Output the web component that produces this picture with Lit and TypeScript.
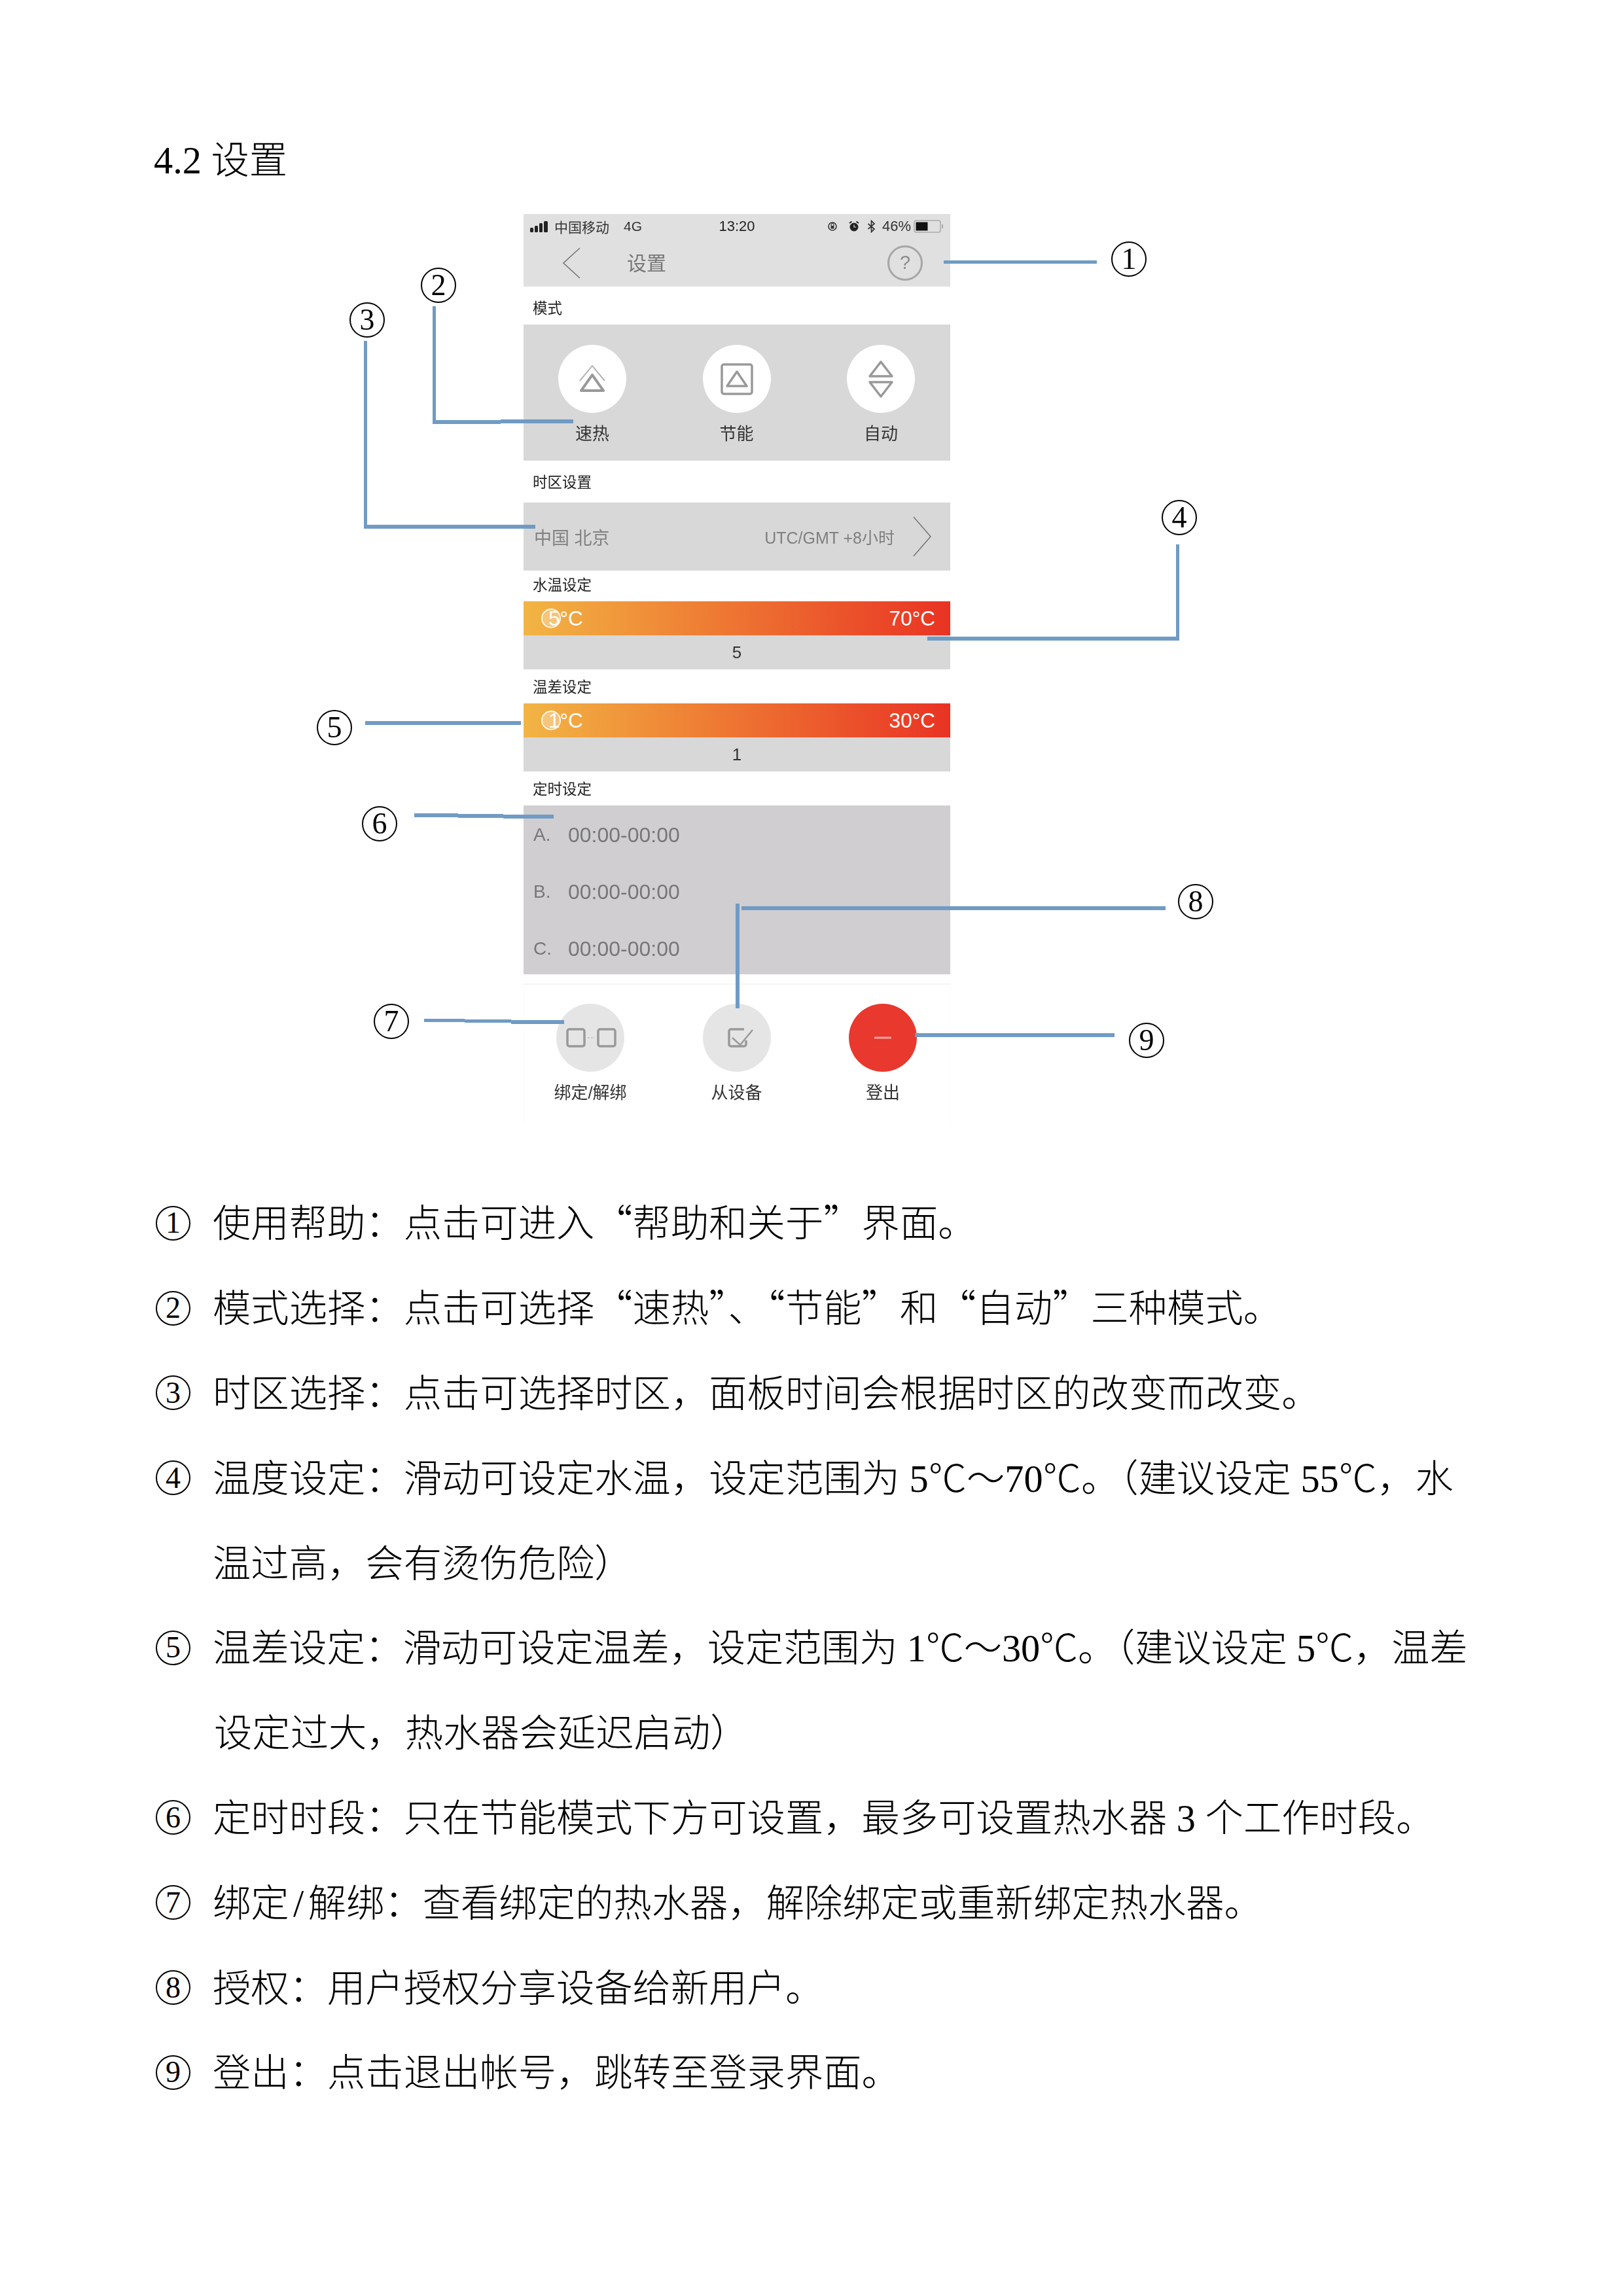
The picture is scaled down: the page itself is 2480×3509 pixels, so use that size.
import { LitElement, html, css, svg } from "lit";
import { customElement } from "lit/decorators.js";

const n = (s: string) => html`<span class="n">${s}</span>`;

const lines: number[][] = [
  [1442, 398, 234, 5],
  [661, 468, 5, 180], [661, 642, 104, 6], [765, 641, 111, 6],
  [556, 521, 5, 287], [556, 802, 262, 6],
  [1797, 832, 5, 146], [1417, 973, 385, 6],
  [558, 1102, 238, 6],
  [633, 1243, 67, 6], [700, 1244, 69, 6], [769, 1245, 77, 6],
  [648, 1557, 62, 5], [710, 1558, 71, 5], [781, 1559, 81, 6],
  [1133, 1385, 648, 6], [1124, 1381, 6, 160],
  [1398, 1579, 305, 6],
];
const marks: number[][] = [
  [1725, 396], [670, 436], [561, 489], [1802, 791], [511, 1112],
  [580, 1259], [598, 1561], [1827, 1378], [1752, 1590],
];

const stroke = "#999";
const icons = {
  fast: svg`<path d="M33 55 52 32 71 55" fill="none" stroke="#b5b5b5" stroke-width="2"/><path d="M52 46 69 70H35Z" fill="none" stroke="${stroke}" stroke-width="4" stroke-linejoin="round"/>`,
  eco: svg`<rect x="29" y="30" width="46" height="45" rx="3" fill="none" stroke="${stroke}" stroke-width="3.5"/><path d="M52 41 67 63H37Z" fill="none" stroke="${stroke}" stroke-width="3.5" stroke-linejoin="round"/>`,
  auto: svg`<path d="M52 26 69 48H35Z" fill="none" stroke="${stroke}" stroke-width="3.5" stroke-linejoin="round"/><path d="M35 57H69L52 79Z" fill="none" stroke="${stroke}" stroke-width="3.5" stroke-linejoin="round"/>`,
  bind: svg`<rect x="17" y="39" width="26" height="26" rx="3" fill="none" stroke="${stroke}" stroke-width="3.5"/><rect x="64" y="39" width="26" height="26" rx="3" fill="none" stroke="${stroke}" stroke-width="3.5"/><path d="M48 52H59" stroke="#c8c8c8" stroke-width="2" stroke-dasharray="3 2"/>`,
  slave: svg`<path d="M63 39H43a3 3 0 0 0-3 3V62a3 3 0 0 0 3 3H63a3 3 0 0 0 3-3V56" fill="none" stroke="${stroke}" stroke-width="3.5"/><path d="M45 52 57 63 76 40" fill="none" stroke="${stroke}" stroke-width="2.4"/>`,
  out: svg`<path d="M39 52H65" stroke="#f4a59f" stroke-width="3"/>`,
};

@customElement("app-root")
export class AppRoot extends LitElement {
  static styles = css`
    :host { display: flow-root; width: 2480px; height: 3509px; overflow: hidden; background: #fff; color: #000;
      font-family: "Noto Sans CJK SC", "Liberation Serif", sans-serif; font-weight: 300; }
    .n { font-family: "Liberation Serif", serif; font-weight: 400; }
    .slash { padding: 0 .11em; }
    .title { margin-top: 212px; padding-left: 235px; height: 64px; font-size: 58.33px; line-height: 56px; }
    .figure { position: relative; margin-top: 51px; padding-left: 800px; }
    .overlay { position: absolute; left: 0; top: 0; width: 2480px; height: 1400px; }
    .overlay text { font-family: "Liberation Serif", serif; font-size: 46px; }
    .phone { width: 652px; filter: blur(0.6px); font-family: "Liberation Sans", "Noto Sans CJK SC", sans-serif; font-weight: 400; color: #333; }
    .head { background: #e0e0e0; height: 111px; }
    .status { height: 38px; display: grid; grid-template-columns: 1fr auto 1fr; align-items: center; font-size: 21px; color: #333; }
    .status-l { display: flex; align-items: center; padding-left: 10px; }
    .sig { margin-right: 9px; }
    .g4 { margin-left: 22px; }
    .time { font-size: 22px; color: #222; }
    .status-r { display: flex; align-items: center; justify-content: flex-end; padding-right: 11px; font-size: 22px; }
    .alarm { margin-left: 18px; }
    .bt { margin-left: 12px; margin-right: 10px; }
    .batt { margin-left: 4px; }
    .nav { height: 73px; display: flex; align-items: center; padding: 0 42px 0 60px; }
    .nav-t { margin-left: 71px; font-size: 30px; color: #777; flex: 1; padding-bottom: 3px; }
    .help { width: 54px; height: 54px; box-sizing: border-box; border: 3px solid #a6a6a6; border-radius: 50%;
      display: flex; align-items: center; justify-content: center; font-size: 29px; color: #8c8c8c; }
    .sec { display: flex; align-items: center; padding: 0 14px 3px; height: 52px; box-sizing: border-box; font-size: 22.5px; color: #222; }
    .s1 { height: 58px; padding-top: 4px; padding-bottom: 0; }
    .s2 { height: 64px; }
    .s3 { height: 47px; padding-bottom: 8px; }
    .row3 { display: flex; justify-content: space-between; padding: 0 54px 0 53px; }
    .modes { background: #d8d8d8; height: 208px; padding-top: 31px; box-sizing: border-box; }
    .item { width: 104px; display: flex; flex-direction: column; align-items: center; }
    .dot { width: 104px; height: 104px; border-radius: 50%; background: #fff; }
    .dot svg { display: block; }
    .lab { white-space: nowrap; font-size: 26px; line-height: 30px; color: #333; }
    .modes .lab { margin-top: 17px; }
    .tz { background: #d8d8d8; height: 104px; display: flex; align-items: center; padding: 0 29px 0 16px; color: #808080; }
    .tz-a { font-size: 27px; flex: 1; }
    .tz-b { font-size: 25px; margin-right: 28px; }
    .grad { height: 52px; display: flex; align-items: center; justify-content: space-between; position: relative;
      padding: 0 23px 0 38px; color: #fff; font-size: 31.5px;
      background: linear-gradient(90deg, #f2b544 0%, #ee7a33 45%, #e93324 100%); }
    .thumb { position: absolute; left: 27px; top: 11px; width: 30px; height: 30px; box-sizing: border-box; border: 2px solid rgba(255,255,255,.85);
      border-radius: 50%; background: rgba(255,255,255,.3); }
    .val { height: 52px; background: #d8d8d8; display: flex; align-items: center; justify-content: center; font-size: 26px; color: #333; }
    .sched { height: 258px; background: #d0ced1; box-sizing: border-box; padding: 30px 0 0 15px; display: flex; flex-direction: column; gap: 57px; color: #777; font-size: 32px; }
    .sched div { height: 30px; line-height: 30px; display: grid; grid-template-columns: 53px auto; }
    .ltr { font-size: 28px; }
    .bottom { margin-top: 14px; height: 216px; box-sizing: border-box; padding: 29px 50px 0 49px; border-top: 2px solid #f5f5f5; border-left: 1px solid #fafafa; border-right: 1px solid #fafafa; }
    .bottom .lab { margin-top: 17px; }
    .grey { background: #e5e5e5; }
    .red { background: #e9382e; }
    .list { margin-top: 81px; font-size: 58.33px; color: #000; }
    .line { height: 129.8px; display: flex; align-items: center; white-space: pre; padding-left: 238px; }
    .line.cont { padding-left: 325px; }
    .line.cont2 { padding-left: 327px; }
    .tight { letter-spacing: -.2px; }
    .badge { width: 53px; height: 53px; box-sizing: border-box; border: 2px solid #000; border-radius: 50%; margin: 9px 34px 0 0;
      display: flex; align-items: center; justify-content: center; font-family: "Liberation Serif", serif; font-size: 46px; font-weight: 400; line-height: 1; }
  `;

  private item(icon: unknown, label: string, cls = "") {
    return html`<div class="item"><div class="dot ${cls}"><svg width="104" height="104" viewBox="0 0 104 104">${icon}</svg></div><div class="lab">${label}</div></div>`;
  }

  private row(num: number, body: unknown) {
    return html`<div class="line"><span class="badge">${num}</span><span>${body}</span></div>`;
  }

  render() {
    return html`
      <div class="title" lang="zh-CN"><span class="n">4.2 </span>设置</div>
      <div class="figure" lang="zh-CN">
        <div class="phone">
          <div class="head">
            <div class="status">
              <div class="status-l">
                <svg class="sig" width="28" height="17" viewBox="0 0 28 17"><g fill="#222"><rect x="0" y="10" width="5" height="7" rx="1.5"/><rect x="7" y="7" width="5" height="10" rx="1.500"/><rect x="14" y="3" width="5" height="14" rx="1.5"/><rect x="21" y="0" width="6" height="17" rx="1.5"/></g></svg>
                <span>中国移动</span><span class="g4">4G</span>
              </div>
              <div class="time">13:20</div>
              <div class="status-r">
                <svg width="14" height="18" viewBox="0 0 14 18"><circle cx="7" cy="9" r="6" fill="none" stroke="#333" stroke-width="1.6"/><rect x="4.5" y="8" width="5" height="4.500" fill="#333"/><path d="M5 8V6.500a2 2 0 0 1 4 0V8" fill="none" stroke="#333" stroke-width="1.2"/></svg>
                <svg class="alarm" width="16" height="18" viewBox="0 0 16 18"><circle cx="8" cy="10" r="6.500" fill="#222"/><path d="M1 4 4.500 1.500M15 4 11.500 1.500" stroke="#222" stroke-width="2"/><path d="M8 6.500V10H11" stroke="#ddd" stroke-width="1.200" fill="none"/></svg>
                <svg class="bt" width="13" height="20" viewBox="0 0 13 20"><path d="M1.500 6 11 14 6.500 18.500V1.500L11 6 1.500 14" fill="none" stroke="#333" stroke-width="1.700"/></svg>
                <span>46%</span>
                <svg class="batt" width="45" height="20" viewBox="0 0 45 20"><rect x="1" y="1" width="40" height="18" rx="3" fill="none" stroke="#aaa" stroke-width="1.500"/><rect x="3.500" y="3.500" width="18" height="13" fill="#111"/><rect x="43" y="7" width="2" height="6" fill="#aaa"/></svg>
              </div>
            </div>
            <div class="nav">
              <svg width="27" height="48" viewBox="0 0 27 48"><path d="M26 1 1 24 26 47" fill="none" stroke="#777" stroke-width="1.600"/></svg>
              <div class="nav-t">设置</div>
              <div class="help">?</div>
            </div>
          </div>
          <div class="sec s1">模式</div>
          <div class="modes row3">
            ${this.item(icons.fast, "速热")}${this.item(icons.eco, "节能")}${this.item(icons.auto, "自动")}
          </div>
          <div class="sec s2">时区设置</div>
          <div class="tz">
            <span class="tz-a">中国 北京</span><span class="tz-b">UTC/GMT +8小时</span>
            <svg width="28" height="62" viewBox="0 0 28 62"><path d="M1 1 27 31 1 61" fill="none" stroke="#777" stroke-width="1.600"/></svg>
          </div>
          <div class="sec s3">水温设定</div>
          <div class="grad"><span class="thumb"></span><span>5°C</span><span>70°C</span></div>
          <div class="val">5</div>
          <div class="sec">温差设定</div>
          <div class="grad"><span class="thumb"></span><span>1°C</span><span>30°C</span></div>
          <div class="val">1</div>
          <div class="sec">定时设定</div>
          <div class="sched">
            <div><span class="ltr">A.</span><span>00:00-00:00</span></div>
            <div><span class="ltr">B.</span><span>00:00-00:00</span></div>
            <div><span class="ltr">C.</span><span>00:00-00:00</span></div>
          </div>
          <div class="bottom row3">
            ${this.item(icons.bind, "绑定/解绑", "grey")}${this.item(icons.slave, "从设备", "grey")}${this.item(icons.out, "登出", "red")}
          </div>
        </div>
        <svg class="overlay" viewBox="0 327 2480 1400">
          ${lines.map(([x, y, w, h]) => svg`<rect x=${x} y=${y} width=${w} height=${h} fill="#709bc4"/>`)}
          ${marks.map(([x, y], i) => svg`<circle cx=${x} cy=${y} r="26" fill="none" stroke="#000" stroke-width="2"/><text x=${x} y=${y + 15} text-anchor="middle">${i + 1}</text>`)}
        </svg>
      </div>
      <div class="list" lang="zh-CN">
        ${this.row(1, html`使用帮助：点击可进入“帮助和关于”界面。`)}
        ${this.row(2, html`模式选择：点击可选择“速热”、“节能”和“自动”三种模式。`)}
        ${this.row(3, html`时区选择：点击可选择时区，面板时间会根据时区的改变而改变。`)}
        ${this.row(4, html`温度设定：滑动可设定水温，设定范围为${n(" 5")}℃～${n("70")}℃。（建议设定${n(" 55")}℃，水`)}
        <div class="line cont">温过高，会有烫伤危险）</div>
        ${this.row(5, html`<span class="tight">温差设定：滑动可设定温差，设定范围为${n(" 1")}℃～${n("30")}℃。（建议设定${n(" 5")}℃，温差</span>`)}
        <div class="line cont2">设定过大，热水器会延迟启动）</div>
        ${this.row(6, html`定时时段：只在节能模式下方可设置，最多可设置热水器${n(" 3 ")}个工作时段。`)}
        ${this.row(7, html`绑定<span class="n slash">/</span>解绑：查看绑定的热水器，解除绑定或重新绑定热水器。`)}
        ${this.row(8, html`授权：用户授权分享设备给新用户。`)}
        ${this.row(9, html`登出：点击退出帐号，跳转至登录界面。`)}
      </div>
    `;
  }
}
